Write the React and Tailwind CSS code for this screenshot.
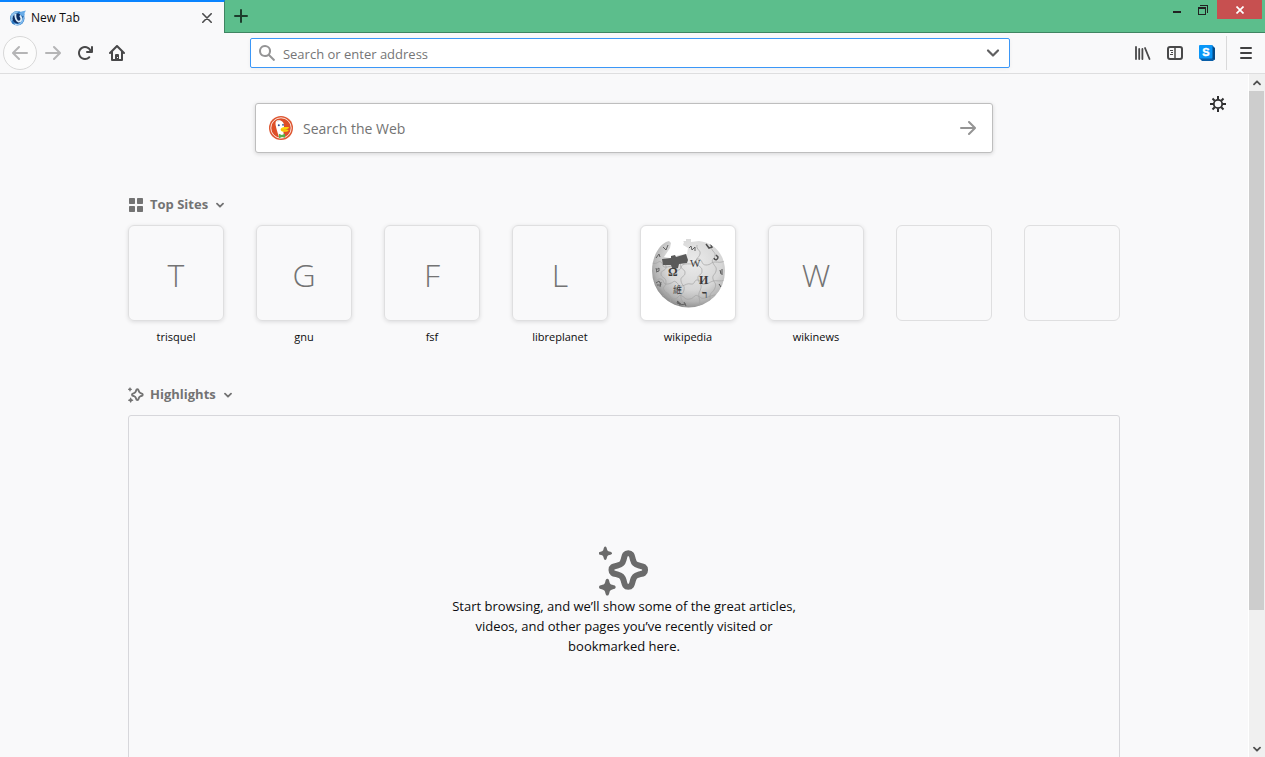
const paths = {
  back: "M15 7H3.414l4.293-4.293a1 1 0 0 0-1.414-1.414l-6 6a1 1 0 0 0 0 1.414l6 6a1 1 0 0 0 1.414-1.414L3.414 9H15a1 1 0 0 0 0-2z",
  forward:
    "M15.707 7.293l-6-6a1 1 0 0 0-1.414 1.414L12.586 7H1a1 1 0 0 0 0 2h11.586l-4.293 4.293a1 1 0 1 0 1.414 1.414l6-6a1 1 0 0 0 0-1.414z",
  reload:
    "M15 1a1 1 0 0 0-1 1v2.418A6.995 6.995 0 1 0 8 15a6.954 6.954 0 0 0 4.95-2.05 1 1 0 0 0-1.414-1.414A5.019 5.019 0 1 1 12.549 6H10a1 1 0 0 0 0 2h5a1 1 0 0 0 1-1V2a1 1 0 0 0-1-1z",
  home: "M15.707 7.293l-7-7a1 1 0 0 0-1.414 0l-7 7a1 1 0 0 0 1.414 1.414L2 8.414V15a1 1 0 0 0 1 1h10a1 1 0 0 0 1-1V8.414l.293.293a1 1 0 0 0 1.414-1.414zM12 14h-2v-4a1 1 0 0 0-1-1H7a1 1 0 0 0-1 1v4H4V6.414l4-4 4 4V14zM8 12h1v1H8z",
  search:
    "M15.7 14.3l-4.8-4.8A6 6 0 1 0 9.5 10.9l4.8 4.8a1 1 0 0 0 1.4-1.4zM6 10a4 4 0 1 1 0-8 4 4 0 0 1 0 8z",
  menu: "M3 2h10a1 1 0 0 1 0 2H3a1 1 0 0 1 0-2zm0 5h10a1 1 0 0 1 0 2H3a1 1 0 0 1 0-2zm0 5h10a1 1 0 0 1 0 2H3a1 1 0 0 1 0-2z",
};

function Icon({ name, className = "size-4" }) {
  return (
    <svg viewBox="0 0 16 16" className={className} fill="currentColor" fillRule="evenodd" aria-hidden="true">
      <path d={paths[name]} />
    </svg>
  );
}

function Chevron({ className }) {
  return (
    <svg viewBox="0 0 16 16" className={className} fill="none" stroke="currentColor" strokeLinecap="round" strokeLinejoin="round" aria-hidden="true">
      <path d="M3 5.500l5 5 5-5" strokeWidth="2.200" />
    </svg>
  );
}

function SmallChevron({ className }) {
  return (
    <svg viewBox="0 0 8 8" className={className} fill="none" stroke="currentColor" strokeLinecap="round" strokeLinejoin="round" aria-hidden="true">
      <path d="M1 2.700l3 3 3-3" strokeWidth="1.800" />
    </svg>
  );
}

function Sparkles({ className }) {
  return (
    <svg viewBox="0 0 48 48" className={className} fill="currentColor" aria-hidden="true">
      <path
        d="M28 6c-3.600 0-3.600 2.500-4.700 6.500-1.100 3.800-2 4.700-5.800 5.800-4 1.100-6.500 1.100-6.500 4.700s2.500 3.600 6.500 4.700c3.800 1.100 4.700 2 5.800 5.800 1.100 4 1.100 6.500 4.700 6.500s3.600-2.500 4.700-6.500c1.100-3.800 2-4.700 5.800-5.800 4-1.100 6.500-1.100 6.500-4.700s-2.500-3.600-6.500-4.700c-3.800-1.100-4.700-2-5.800-5.800C31.600 8.500 31.600 6 28 6z"
        fill="none"
        stroke="currentColor"
        strokeWidth="6"
        strokeLinejoin="round"
        transform="translate(1.500 1.200) scale(.95)"
      />
      <path d="M6 .5c1 0 1.200.8 1.700 2.600C8.100 4.500 8.500 4.900 9.900 5.300c1.800.5 2.600.7 2.600 1.700s-.8 1.200-2.600 1.700c-1.400.4-1.800.8-2.200 2.200-.5 1.800-.7 2.600-1.700 2.600s-1.200-.8-1.700-2.600C3.900 9.500 3.500 9.100 2.100 8.700.3 8.200-.5 8-.5 7s.8-1.200 2.600-1.700c1.400-.4 1.800-.8 2.200-2.200C4.800 1.300 5 .5 6 .5z" />
      <path d="M8 31.500c1.200 0 1.500 1 2.100 3.200.5 1.700.9 2.100 2.600 2.600 2.200.6 3.300.9 3.300 2.200s-1.100 1.600-3.300 2.200c-1.700.5-2.100.9-2.600 2.600-.6 2.200-.9 3.200-2.100 3.200s-1.500-1-2.100-3.200c-.5-1.700-.9-2.100-2.600-2.600C1.100 41.100 0 40.800 0 39.500s1.100-1.600 3.300-2.200c1.700-.5 2.100-.9 2.600-2.600.6-2.200.9-3.200 2.100-3.200z" />
    </svg>
  );
}

function BrowserLogo() {
  return (
    <svg viewBox="0 0 16 16" className="size-4" aria-hidden="true">
      <circle cx="7.300" cy="8.300" r="7.200" fill="#2f7ac2" />
      <path d="M1 5.500C2.500 1.500 6 .8 9 1.400L7 3C4.500 3.500 3 5.500 3.300 9L1.200 12C.4 10 .3 7.500 1 5.500z" fill="#8cc0ec" />
      <circle cx="7.600" cy="8.500" r="5" fill="#0c2d63" />
      <path d="M4.300 4.200L6.500 3.400C6 6 6.300 8.500 8 10.500c1.600.6 2.600-.5 2.400-2.300L9.300 6l1.600-1.200 1.600 3.400c.2 2.800-1.700 4.600-4.300 4.300C5.500 11.200 4.200 7.500 4.300 4.200z" fill="#d9ecfb" />
      <path d="M9 3.200L11.500 1.400 16 .6l-1.500 2.400.3 2.600-2.300.4L10.500 5z" fill="#67abe8" />
      <path d="M13.500 6c1.300 4-.7 7.500-4 9L5 15c4.500-.5 7.300-4 8.500-9z" fill="#82bcf0" />
      <path d="M4 13.500l3 .5 2 1.300-4-.2z" fill="#bcdcf7" />
    </svg>
  );
}

function DuckLogo() {
  return (
    <svg viewBox="0 0 24 24" className="size-6 shrink-0" aria-hidden="true">
      <circle cx="12" cy="12" r="12" fill="#de5833" />
      <circle cx="12" cy="12" r="10.200" fill="#de4f28" stroke="#fbe3dc" strokeWidth="1" />
      <path d="M7 5.300C8.300 4 11.500 4 13.200 5.600c1.500 1.300 2 3.200 1.800 5.400l-.6 5 .8 5.500-4.800.8C9 18 7.300 12.500 6.700 9.500c-.3-1.800-.2-3.200.3-4.200z" fill="#fff" />
      <path d="M7 5.300l2-1.400 2 .6-1.800 1z" fill="#d5d7d8" />
      <circle cx="9.800" cy="9.300" r="1" fill="#2d4f8e" />
      <circle cx="14" cy="8.800" r=".9" fill="#2d4f8e" />
      <path d="M12 12.500c1.500-1.600 5-1.700 8-1.200.5.800-1.600 1.600-3.400 2.100 1.300.4 2.600.3 3 .8-.6 1.500-4.200 2-6.600 1.200-1.400-.6-1.800-1.900-1-2.900z" fill="#fdd20a" />
      <path d="M12 13.800c2.300.5 4.300.2 6.300-.5" stroke="#e8a30c" strokeWidth=".7" fill="none" />
      <path d="M9.800 17.800l3 1.200 3.200-1.200v4l-2.900-.8-3 1.200z" fill="#55b04a" />
    </svg>
  );
}

const serif = "font-['Liberation_Serif',serif]";

function WikipediaGlobe() {
  return (
    <svg viewBox="0 0 94 94" className="size-full" role="img" aria-label="Wikipedia">
      <defs>
        <radialGradient id="globe" cx=".56" cy=".38" r=".5">
          <stop offset="0" stopColor="#ebebeb" />
          <stop offset=".6" stopColor="#d6d6d6" />
          <stop offset=".85" stopColor="#b4b4b4" />
          <stop offset="1" stopColor="#8c8c8c" />
        </radialGradient>
        <clipPath id="ball">
          <path d="M25 16l3-1 2 2-1 5-6 9 6 1 9-3 8-1 1-6-5-3 1-3-1-1 3 0 0-2 5 0 0 3 8-1C75 17 84 30 84 45a36.500 36.500 0 0 1-73 0C11 33 16 21 25 16z" />
        </clipPath>
      </defs>
      <g clipPath="url(#ball)">
        <rect width="94" height="94" fill="url(#globe)" />
        <g fill="none" stroke="#a4a4a4" strokeWidth=".7">
          <path d="M11 37c6 2 6-3 9-1s0 6 6 5 6-2 8 1 5 3 6-1 8-3 11-3 3-6 7-5 2 6 7 6 5-3 9-3 5 1 10-1" />
          <path d="M11 56c5 1 5-4 9-3s1 6 7 5 5-4 8-2 2 5 6 4 5-3 9-2 3-5 7-4 2 5 7 4 5-2 8-3 7 1 12-1" />
          <path d="M18 72c5-2 6-5 9-3s3 5 7 4 3-5 7-3 3 4 8 3 4-5 8-3 3 3 7 2 6-3 12-3" />
          <path d="M24 33c-2 5 2 6 1 9s-5 2-5 6 5 3 5 8-4 4-2 8 5 2 6 7 0 6 3 9" />
          <path d="M40 32c2 4-2 5 0 9s4 2 4 6-5 3-4 8 4 4 3 9-4 3-3 8 4 5 3 9" />
          <path d="M56 19c-1 5 4 5 3 9s-5 4-3 9 5 3 5 8-5 3-4 8 4 5 3 9-3 5-2 9 1 5 0 10" />
          <path d="M70 21c1 5 5 5 4 9s-4 3-2 7 4 4 3 8-4 4-3 8 4 4 2 9-5 4-5 9 0 4-2 9" />
        </g>
        <g fill="none" stroke="#606060" strokeWidth="1">
          <path d="M15 32l3-4 1 3m3-10l3 3 2-5m-12 25l3-2 0 3-3 1m0-4l1 4m-1 11l3-2 2 4-4 0m4-3l-1 5" />
          <path d="M48 22l2-2 1 4 3-3 0 4M40 78l-4-3 3 3-3-1 1-2M38 79l7-1 M43 76l2 4" />
        </g>
        <g fill="none" stroke="#505050" strokeWidth="1.500">
          <path d="M65 18l3 4 3-1-2-4" />
          <path d="M73 32c1 3 4 2 4-1l-2-2" />
          <path d="M79 44l1 4m1-5l0 6m-3 9l2 3" strokeWidth="1" />
        </g>
      </g>
      <path d="M21 33l9-1 0-2 4-1 1 2 10-3 2 6-1 3-8 1-1 4-3 1-3-1-1-3-8 0z" fill="#5a5a5a" />
      <g fill="#3a3a3a" className={serif}>
        <text x="27" y="50" fontSize="12" fontWeight="700">Ω</text>
        <text x="49" y="41" fontSize="11">W</text>
        <text x="58" y="58" fontSize="12" fontWeight="700">И</text>
        <text x="61" y="72" fontSize="11" fontWeight="700">ר</text>
        <text x="32" y="67" fontSize="9" className="font-['Noto_Sans_CJK_TC',sans-serif]">維</text>
      </g>
    </svg>
  );
}

function ToolButton({ label, children, className = "text-[#484849]" }) {
  return (
    <button aria-label={label} className={`flex size-8 shrink-0 items-center justify-center ${className}`}>
      {children}
    </button>
  );
}

function TabStrip() {
  return (
    <header className="flex h-[33px] shrink-0 items-stretch bg-[#5cbe8c]">
      <div className="flex w-[225px] items-center border-t-2 border-r border-t-[#0a84ff] border-r-[#3f8562] bg-[#f9f9fa] pr-[7px] pl-2.5">
        <BrowserLogo />
        <span className="ml-[5px] flex-1 text-[12px] text-[#0c0c0d]">New Tab</span>
        <button aria-label="Close tab" className="flex size-5 items-center justify-center text-[#4a4a4b]">
          <svg viewBox="0 0 10 10" className="size-2.5" stroke="currentColor" strokeWidth="1.600" strokeLinecap="round" aria-hidden="true">
            <path d="M.8.8l8.400 8.400M9.200.8L.8 9.200" />
          </svg>
        </button>
      </div>
      <div className="flex flex-1 items-start justify-between border-b border-[#3f8562]">
        <button aria-label="Open a new tab" className="flex size-8 items-center justify-center text-[#1d3c2c]">
          <svg viewBox="0 0 14 14" className="size-3.5" stroke="currentColor" strokeWidth="2" strokeLinecap="round" aria-hidden="true">
            <path d="M7 1v12M1 7h12" />
          </svg>
        </button>
        <div className="flex pr-[3px]">
          <button aria-label="Minimize" className="flex h-[19px] w-[26px] items-center justify-center pt-[5px] text-[#222]">
            <svg viewBox="0 0 8 2" className="h-0.5 w-2" fill="currentColor" aria-hidden="true"><rect width="8" height="2" /></svg>
          </button>
          <button aria-label="Restore" className="mr-px flex h-[19px] w-[26px] items-center justify-center text-[#222]">
            <svg viewBox="0 0 10 10" className="size-2.5" fill="none" stroke="currentColor" shapeRendering="crispEdges" aria-hidden="true">
              <path d="M.5 2.500h7v7h-7zM0 3.500h8M2 .5h7.500V8" />
            </svg>
          </button>
          <button aria-label="Close window" className="flex h-[19px] w-[45px] items-center justify-center bg-[#c75050] text-white">
            <svg viewBox="0 0 8 8" className="size-2" stroke="currentColor" strokeWidth="1.700" aria-hidden="true">
              <path d="M.5.5l7 7M7.500.5l-7 7" />
            </svg>
          </button>
        </div>
      </div>
    </header>
  );
}

function Toolbar() {
  return (
    <nav className="flex h-[41px] shrink-0 items-center border-b border-[#dededf] bg-[#f9f9fa] px-[3px]">
      <button aria-label="Back" className="flex size-[34px] shrink-0 items-center justify-center rounded-full border border-[#d8d8d8] bg-[#fcfcfc] text-[#b5b5b6]">
        <Icon name="back" />
      </button>
      <ToolButton label="Forward" className="text-[#b5b5b6]"><Icon name="forward" /></ToolButton>
      <ToolButton label="Reload"><Icon name="reload" /></ToolButton>
      <ToolButton label="Home"><Icon name="home" /></ToolButton>
      <div className="flex-2" />
      <div className="min-w-0 flex-13">
        <div className="flex h-[30px] items-center rounded-xs border border-[#3b97f7] bg-white px-2 shadow-[0_1px_4px_rgba(0,0,0,0.05)]">
          <Icon name="search" className="size-4 shrink-0 text-[#949495]" />
          <input
            aria-label="Search or enter address"
            placeholder="Search or enter address"
            className="ml-2 h-full min-w-0 flex-1 bg-transparent pt-0.5 text-[13px] outline-none placeholder:text-[#757576]"
          />
          <button aria-label="Show history" className="flex size-4 items-center justify-center text-[#606061]">
            <Chevron className="size-4" />
          </button>
        </div>
      </div>
      <div className="flex-2" />
      <ToolButton label="Library">
        <svg viewBox="0 0 16 16" className="size-4" fill="none" stroke="currentColor" strokeLinecap="round" aria-hidden="true">
          <path d="M1 2v12M4.200 4v10M7.400 4v10" strokeWidth="1.800" />
          <path d="M10 3l4.500 11" strokeWidth="1.800" />
        </svg>
      </ToolButton>
      <ToolButton label="Sidebars">
        <svg viewBox="0 0 16 16" className="size-4" fill="none" stroke="currentColor" aria-hidden="true">
          <rect x="1" y="2" width="14" height="12" rx="2" strokeWidth="2" />
          <path d="M8 2v12" strokeWidth="1.500" />
          <path d="M3 5.500h3M4 7.500h2M3 9.500h3" />
        </svg>
      </ToolButton>
      <ToolButton label="Extension">
        <svg viewBox="0 0 16 16" className="size-4" aria-hidden="true">
          <path d="M0 13l3 3h11l2-2V3l-3-3z" fill="#0a5fa8" />
          <path d="M13 13l3 2V3.500l-3-2z" fill="#074b87" />
          <rect width="13.500" height="13.500" rx="1" fill="#0996f8" />
          <text x="6.800" y="10.500" textAnchor="middle" fontSize="11" fontWeight="700" fill="#fff" stroke="#fff" strokeWidth=".4" className="font-['Liberation_Sans',sans-serif]">S</text>
        </svg>
      </ToolButton>
      <div className="ml-[3px] h-[34px] w-px bg-[#d9d9da]" />
      <ToolButton label="Open menu" className="ml-[3px] text-[#404041]"><Icon name="menu" /></ToolButton>
    </nav>
  );
}

function WebSearch() {
  return (
    <form className="mx-auto flex h-[50px] w-full max-w-[738px] items-center rounded-[3px] border border-[#bebebe] bg-white pr-4 pl-[13px] shadow-[0_1px_4px_rgba(12,12,13,0.15)]">
      <DuckLogo />
      <input
        aria-label="Search the Web"
        placeholder="Search the Web"
        className="ml-2.5 h-full min-w-0 flex-1 bg-transparent text-[14px] outline-none placeholder:text-[#737373]"
      />
      <button type="button" aria-label="Search" className="text-[#949494]"><Icon name="forward" /></button>
    </form>
  );
}

function SectionTitle({ icon, children }) {
  return (
    <h2>
      <button className="flex h-5 items-center text-[13px] font-bold text-[#737373]">
        {icon}
        <span className="ml-1.5">{children}</span>
        <SmallChevron className="ml-2 size-2" />
      </button>
    </h2>
  );
}

const sites = [
  { name: "trisquel", letter: "T" },
  { name: "gnu", letter: "G" },
  { name: "fsf", letter: "F" },
  { name: "libreplanet", letter: "L" },
  { name: "wikipedia", logo: true },
  { name: "wikinews", letter: "W" },
];

const tile = "flex size-24 items-center justify-center rounded-md border border-[#dfdfe0]";

function TopSites() {
  return (
    <section className="mt-[42px]">
      <SectionTitle
        icon={
          <svg viewBox="0 0 16 16" className="size-4" fill="currentColor" aria-hidden="true">
            <rect x="1" y="1" width="6" height="6" rx=".7" />
            <rect x="9" y="1" width="6" height="6" rx=".7" />
            <rect x="1" y="9" width="6" height="6" rx=".7" />
            <rect x="9" y="9" width="6" height="6" rx=".7" />
          </svg>
        }
      >
        Top Sites
      </SectionTitle>
      <ul className="mt-2.5 flex justify-between">
        {sites.map((site) => (
          <li key={site.name}>
            <a href={`#${site.name}`} className="block w-24 text-center">
              <span className={`${tile} shadow-[0_1px_4px_rgba(12,12,13,0.12)] ${site.logo ? "bg-white" : ""}`}>
                {site.logo ? <WikipediaGlobe /> : <span className="pt-1 text-[32px] font-light text-[#737373]">{site.letter}</span>}
              </span>
              <span className="mt-1.5 block text-[11px] leading-5 text-[#0c0c0d]">{site.name}</span>
            </a>
          </li>
        ))}
        <li className={tile} />
        <li className={tile} />
      </ul>
    </section>
  );
}

function Highlights() {
  return (
    <section className="mt-[38px]">
      <SectionTitle icon={<Sparkles className="size-4" />}>Highlights</SectionTitle>
      <div className="mt-2.5 flex h-[371px] flex-col items-center justify-center rounded-[3px] border border-[#d7d7db]">
        <Sparkles className="size-[50px] text-[#6b6b6b]" />
        <p className="max-w-[350px] text-center text-[13px] leading-5 text-[#0c0c0d]">
          Start browsing, and we’ll show some of the great articles, videos, and other pages you’ve recently visited or bookmarked here.
        </p>
      </div>
    </section>
  );
}

function ScrollBar() {
  return (
    <div className="flex w-[17px] shrink-0 flex-col border-l border-white bg-[#f0f0f0] text-[#505050]" aria-hidden="true">
      <div className="flex h-[17px] items-center justify-center pr-px">
        <SmallChevron className="size-2 rotate-180" />
      </div>
      <div className="mr-px min-h-0 flex-[519] bg-[#cdcdcd]" />
      <div className="min-h-0 flex-[130]" />
      <div className="flex h-[17px] items-center justify-center pr-px">
        <SmallChevron className="size-2" />
      </div>
    </div>
  );
}

export default function App() {
  return (
    <div className="flex h-screen flex-col overflow-hidden bg-[#f9f9fa] font-['Open_Sans','Noto_Sans',sans-serif]">
      <TabStrip />
      <Toolbar />
      <div className="flex min-h-0 flex-1">
        <main className="relative min-w-0 flex-1 overflow-hidden px-8">
          <button aria-label="Customize your New Tab page" className="absolute top-[22px] right-[22px] text-[#2f2f30]">
            <svg viewBox="0 0 16 16" className="size-4" fill="none" stroke="currentColor" aria-hidden="true">
              <circle cx="8" cy="8" r="4.200" strokeWidth="1.800" />
              <path d="M8 0v3.500M8 12.500V16M0 8h3.500M12.500 8H16M2.500 2.500l2.200 2.200M11.300 11.300l2.200 2.200M13.500 2.500l-2.200 2.200M4.700 11.300l-2.200 2.200" strokeWidth="2" />
            </svg>
          </button>
          <div className="mx-auto max-w-[992px] pt-[29px]">
            <WebSearch />
            <TopSites />
            <Highlights />
          </div>
        </main>
        <ScrollBar />
      </div>
    </div>
  );
}
